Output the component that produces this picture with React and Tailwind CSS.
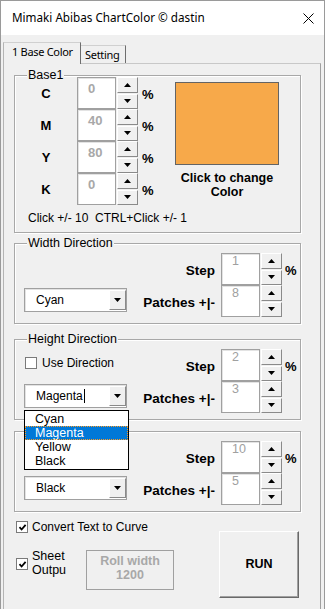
import React from 'react';

// VBA-style userform: Mimaki ChartColor
const raised = 'border border-t-white border-l-white border-r-[#8a8a8a] border-b-[#8a8a8a] bg-[#f0f0f0]';
const sunken = 'border border-[#a0a0a0] bg-white shadow-[inset_1px_1px_0_#e3e3e3]';

const Tri = ({ down }) => (
  <svg width="7" height="4" viewBox="0 0 7 4">
    <path d={down ? 'M0 0h7L3.5 4z' : 'M0 4h7L3.5 0z'} fill="#000" />
  </svg>
);

const Spin = () => (
  <div className="ml-px flex h-[32px] w-[21px] flex-col gap-px">
    <div className={`${raised} flex flex-1 items-center justify-center`}><Tri /></div>
    <div className={`${raised} flex flex-1 items-center justify-center`}><Tri down /></div>
  </div>
);

const Check = ({ on }) => (
  <span className="flex h-[12px] w-[12px] shrink-0 items-center justify-center border border-[#7a7a7a] bg-white">
    {on && (
      <svg width="9" height="9" viewBox="0 0 9 9">
        <path d="M1.5 4.2 L3.6 6.5 L7.6 1.8" fill="none" stroke="#000" strokeWidth="1.8" />
      </svg>
    )}
  </span>
);

const Combo = ({ value, caret }) => (
  <div className={`${sunken} flex h-[24px] w-[103px] items-center`}>
    <span className="flex flex-1 items-center pl-[11px] text-[12px] leading-[16px]">
      {value}
      {caret && <span className="ml-px inline-block h-[14px] w-px bg-black" />}
    </span>
    <div className={`${raised} flex h-[20px] w-[17px] items-center justify-center`}><Tri down /></div>
  </div>
);

const Frame = ({ title, className, children }) => (
  <div className={`relative ml-[10px] w-[287px] border border-[#a8a8a8] shadow-[inset_1px_1px_0_#fff,1px_1px_0_#fff] ${className}`}>
    {title && (
      <span className="absolute -top-[9px] left-[12px] bg-[#f0f0f0] px-px text-[12.5px] leading-[16px]">{title}</span>
    )}
    {children}
  </div>
);

const StepRow = ({ label, value, pct }) => (
  <div className="flex h-[32px]">
    <span className="w-[88px] pt-[10px] text-right text-[13.5px] font-bold leading-[16px]">{label}</span>
    <div className={`${sunken} ml-[6px] h-[32px] w-[39px] pl-[10px] text-[12.5px] leading-[14px] text-[#a0a0a0]`}>{value}</div>
    <Spin />
    {pct && <span className="ml-[3px] pt-[10px] text-[13px] font-bold leading-[16px]">%</span>}
  </div>
);

const DirFrame = ({ title, combo, caret, step, patches, check, list, className }) => (
  <Frame title={title} className={`flex h-[81px] ${className}`}>
    <div className="flex w-[112px] flex-col pl-[9px]">
      {check && (
        <div className="ml-px mt-[15px] flex items-center">
          <Check />
          <span className="ml-[5px] text-[12px] leading-[16px]">Use Direction</span>
        </div>
      )}
      <div className="relative mb-[11px] mt-auto">
        <Combo value={combo} caret={caret} />
        {list && (
          <div className="absolute left-0 top-[26px] z-20 w-[105px] border border-black bg-white py-px text-[12.5px] leading-[14px]">
            {list.map((it) => (
              <div key={it}
                className={it === combo
                  ? 'bg-[#0078d7] pl-[10px] text-white outline-1 -outline-offset-1 outline-dotted outline-[#ff9a1f]'
                  : 'pl-[10px]'}>
                {it}
              </div>
            ))}
          </div>
        )}
      </div>
    </div>
    <div className="mt-[9px] flex flex-col">
      <StepRow label="Step" value={step} pct />
      <StepRow label="Patches +|-" value={patches} />
    </div>
  </Frame>
);

const cmyk = [['C', '0'], ['M', '40'], ['Y', '80'], ['K', '0']];

export default function App() {
  return (
    <div className="flex h-[609px] w-[325px] flex-col overflow-hidden border-x border-t border-[#9a9a9a] bg-[#f0f0f0] font-['Liberation_Sans',Arial,sans-serif] text-black">
      {/* title bar */}
      <div className="flex h-[34px] shrink-0 items-center justify-between bg-white pl-[11px] pr-[10px]">
        <span className="font-['Noto_Sans',sans-serif] text-[11.7px]">Mimaki Abibas ChartColor © dastin</span>
        <svg width="11" height="11" viewBox="0 0 11 11">
          <path d="M0.5 0.5 L10.5 10.5 M10.5 0.5 L0.5 10.5" stroke="#000" strokeWidth="1" />
        </svg>
      </div>

      {/* tabs */}
      <div className="flex h-[28px] shrink-0 items-end pl-[2px] font-['Noto_Sans',sans-serif] text-[11px] tracking-[-0.3px]">
        <div className="relative z-10 -mb-px flex h-[22px] w-[78px] items-start border-l border-t border-r border-l-[#b4b4b4] border-t-[#d0d0d0] border-r-[#6e6e6e] bg-[#f0f0f0] pl-[8px] pt-[1px] leading-[16px]">
          1 Base Color
        </div>
        <div className="flex h-[18px] w-[45px] items-start border-t border-r border-t-[#d0d0d0] border-r-[#6e6e6e] pl-[4px] pt-[1px] leading-[16px]">
          Setting
        </div>
      </div>

      {/* page */}
      <div className="ml-[2px] flex w-[318px] flex-1 flex-col border-x border-t border-l-[#b4b4b4] border-t-[#c8c8c8] border-r-[#a0a0a0]">
        <Frame title="Base1" className="mt-[11px] h-[158px]">
          <div className="flex">
            <div className="w-[160px] pt-px">
              {cmyk.map(([l, v]) => (
                <div key={l} className="flex h-[32px]">
                  <span className="w-[62px] pt-[9px] text-center text-[13px] font-bold leading-[16px]">{l}</span>
                  <div className={`${sunken} h-[32px] w-[39px] pl-[10px] pt-[3px] text-[13px] font-bold leading-[16px] text-[#a8a8a8]`}>{v}</div>
                  <Spin />
                  <span className="ml-[4px] pt-[10px] text-[13px] font-bold leading-[16px]">%</span>
                </div>
              ))}
            </div>
            <div className="flex w-[104px] flex-col items-center">
              <div className="mt-[6px] h-[83px] w-[104px] border border-[#646464] bg-[#f7a94a]" />
              <div className="mt-[6px] whitespace-nowrap text-center text-[12.5px] font-bold leading-[14px]">
                Click to change<br />Color
              </div>
            </div>
          </div>
          <div className="mt-[5px] whitespace-pre pl-[13px] text-[12px] leading-[16px]">Click +/- 10  CTRL+Click +/- 1</div>
        </Frame>

        <DirFrame title="Width Direction" combo="Cyan" step="1" patches="8" className="mt-[10px]" />
        <DirFrame title="Height Direction" combo="Magenta" caret check step="2" patches="3"
          list={['Cyan', 'Magenta', 'Yellow', 'Black']} className="z-10 mt-[15px]" />
        <DirFrame combo="Black" step="10" patches="5" className="mt-[11px]" />

        {/* bottom options */}
        <div className="flex pl-[12px]">
          <div className="flex w-[203px] flex-col">
            <div className="mt-[7px] flex h-[16px] items-center">
              <Check on />
              <span className="ml-[4px] text-[12px] leading-[16px]">Convert Text to Curve</span>
            </div>
            <div className="mt-[14px] flex items-start">
              <div className="mt-[9px]"><Check on /></div>
              <div className="ml-[4px] w-[54px] text-[12.5px] leading-[14px]">Sheet<br />Outpu</div>
              <div className="mt-px flex h-[40px] w-[88px] flex-col items-center justify-center border border-[#a0a0a0] pb-[4px] text-[12.5px] font-bold leading-[14px] text-[#a8a8a8]">
                <span>Roll width</span>
                <span>1200</span>
              </div>
            </div>
          </div>
          <div className="mt-[19px] flex h-[67px] w-[80px] items-center justify-center border border-t-white border-l-white border-r-[#696969] border-b-[#696969] shadow-[inset_-1px_-1px_0_#a0a0a0] text-[12.5px] font-bold">
            RUN
          </div>
        </div>
      </div>
    </div>
  );
}
